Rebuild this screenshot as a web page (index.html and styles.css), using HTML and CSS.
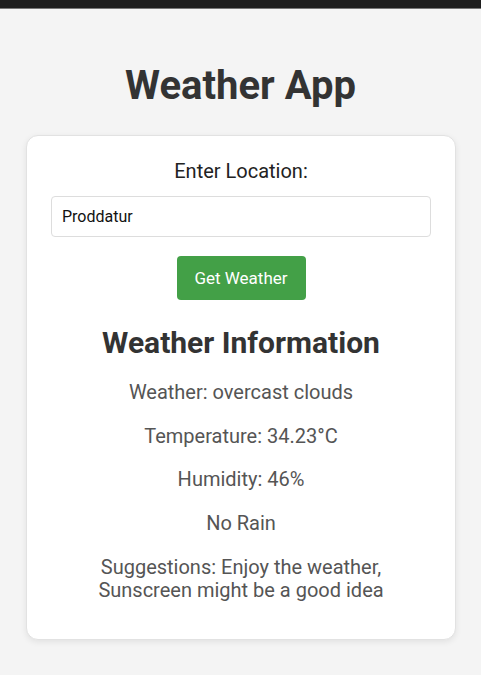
FILE: index.html
```html
<!DOCTYPE html>
<html>
<head>
<meta charset="utf-8">
<link rel="stylesheet" href="styles.css">
</head>
<body>
<div class="topbar"></div>
<h1 class="title">Weather App</h1>
<div class="card">
  <label class="label" for="loc">Enter Location:</label>
  <input class="input" id="loc" type="text" value="Proddatur">
  <button class="btn">Get Weather</button>
  <h2 class="subtitle">Weather Information</h2>
  <p class="info">Weather: overcast clouds</p>
  <p class="info">Temperature: 34.23°C</p>
  <p class="info">Humidity: 46%</p>
  <p class="info">No Rain</p>
  <p class="info">Suggestions: Enjoy the weather, Sunscreen might be a good idea</p>
</div>
</body>
</html>
```
FILE: styles.css
```css
* { box-sizing: border-box; }
html, body { margin: 0; padding: 0; }
body {
  background: #f4f4f4;
  font-family: Roboto, "Liberation Sans", sans-serif;
  color: #333;
  height: 675px;
  overflow: hidden;
}
.topbar {
  height: 9px;
  background: #1e1e1e;
  border-bottom: 1px solid #777;
}
.title {
  margin: 0;
  padding-top: 54px;
  height: 126px;
  text-align: center;
  font-size: 40px;
  font-weight: 700;
  color: #333;
  line-height: 46px;
}
.card {
  width: 430px;
  margin: 0 auto 0 26px;
  background: #fff;
  border: 1px solid #e2e2e2;
  border-radius: 12px;
  box-shadow: 0 2px 6px rgba(0,0,0,0.08);
  padding: 23px 24px 37px;
  display: flex;
  flex-direction: column;
  align-items: center;
  text-align: center;
}
.label {
  font-size: 20px;
  color: #222;
  line-height: 24px;
}
.input {
  margin-top: 13px;
  width: 100%;
  height: 41px;
  border: 1px solid #ddd;
  border-radius: 4px;
  padding: 0 10px;
  font-family: Roboto, sans-serif;
  font-size: 16px;
  color: #111;
  background: #fff;
}
.btn {
  margin-top: 19px;
  width: 129px;
  height: 44px;
  background: #43a047;
  color: #fff;
  border: none;
  border-radius: 4px;
  font-family: Roboto, sans-serif;
  font-size: 17px;
}
.subtitle {
  margin: 26px 0 0;
  font-size: 30px;
  font-weight: 700;
  color: #333;
  line-height: 34px;
}
.info {
  margin: 20.75px 0 0;
  font-size: 20px;
  color: #555;
  line-height: 23px;
  max-width: 310px;
}
```
